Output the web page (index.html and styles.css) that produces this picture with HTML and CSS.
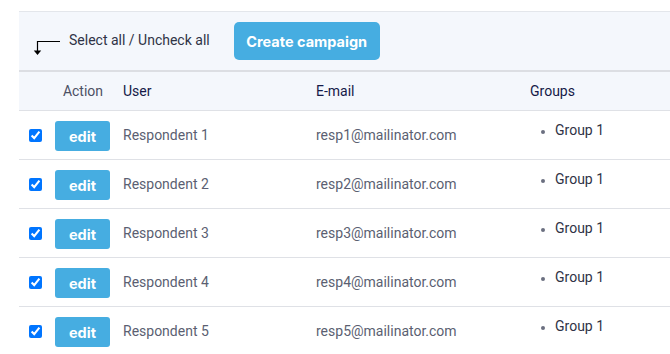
FILE: index.html
```html
<!DOCTYPE html>
<html lang="en">
  <head>
    <meta charset="UTF-8" />
    <meta name="viewport" content="width=device-width, initial-scale=1.0" />
    <title>Respondents</title>
    <link rel="stylesheet" href="styles.css">
  </head>
  <body>
    <div class="page">
      <div class="toolbar">
        <svg class="arrow" width="28" height="16" viewBox="0 0 28 16">
          <path d="M27 1.5H4.5V11" fill="none" stroke="#000" stroke-width="1.2" />
          <path d="M0.8 10.5H8.2L4.5 15Z" fill="#000" />
        </svg>
        <span class="select-all">Select all / Uncheck all</span>
        <button class="btn-campaign">Create campaign</button>
      </div>

      <table class="users">
        <thead>
          <tr>
            <th class="col-check"></th>
            <th class="col-action">Action</th>
            <th class="col-user">User</th>
            <th class="col-email">E-mail</th>
            <th class="col-groups">Groups</th>
          </tr>
        </thead>
        <tbody id="user-rows"></tbody>
      </table>
    </div>

    <script>
      const rows = document.getElementById("user-rows");
      for (let i = 1; i <= 5; i++) {
        const tr = document.createElement("tr");
        tr.innerHTML = `
          <td class="col-check"><input type="checkbox" checked /></td>
          <td class="col-action"><button class="btn-edit">edit</button></td>
          <td class="col-user">Respondent ${i}</td>
          <td class="col-email">resp${i}@mailinator.com</td>
          <td class="col-groups"><ul><li>Group 1</li></ul></td>`;
        rows.appendChild(tr);
      }
    </script>
  </body>
</html>
```

FILE: styles.css
```css
body {
  margin: 0;
  padding: 0;
  background: #fff;
  font-family: Roboto, "Liberation Sans", Arial, sans-serif;
  font-size: 14px;
}

.page {
  padding: 11px 0 0 19px;
}

.toolbar {
  display: flex;
  align-items: center;
  height: 58px;
  padding-left: 14px;
  background: #f4f7fc;
  border-top: 1px solid #e3e6eb;
  border-bottom: 2px solid #dcdee3;
}

.arrow {
  margin-top: 14px;
  margin-right: 8px;
}

.select-all {
  color: #2f3346;
  margin-bottom: 3px;
}

.btn-campaign {
  margin-left: 24px;
  height: 38px;
  width: 146px;
  border: none;
  border-radius: 5px;
  background: #46ade1;
  color: #fff;
  font-family: Inter, "Open Sans", sans-serif;
  font-weight: 700;
  font-size: 14.5px;
  cursor: pointer;
}

.users {
  width: 651px;
  border-collapse: collapse;
}

.users th {
  height: 38px;
  background: #f4f7fc;
  border-bottom: 1px solid #dfe1e6;
  text-align: left;
  font-weight: 400;
  color: #151a48;
  padding: 0 8px;
}

.users th.col-action {
  color: #4c5064;
  text-align: center;
}

.users td {
  height: 48px;
  border-bottom: 1px solid #dfe1e6;
  padding: 0 8px;
  color: #5b5f72;
}

.users .col-check {
  width: 22px;
  padding: 0 0 0 6px;
}

.users .col-action {
  width: 56px;
  padding: 0 4px 0 8px;
}

.users .col-user {
  width: 177px;
}

.users .col-email {
  width: 198px;
}

.col-check input {
  margin: 4px 0 0 4px;
  width: 13px;
  height: 13px;
}

.btn-edit {
  display: block;
  width: 55px;
  height: 30px;
  margin-top: 2px;
  border: none;
  border-radius: 3px;
  background: #46ade1;
  color: #fff;
  font-family: Inter, "Open Sans", sans-serif;
  font-weight: 700;
  font-size: 14.5px;
  cursor: pointer;
}

.col-groups ul {
  margin: 0 0 10px;
  padding-left: 25px;
  color: #2f3346;
}

.col-groups li::marker {
  color: #6b6f80;
  font-size: 12px;
}
```
